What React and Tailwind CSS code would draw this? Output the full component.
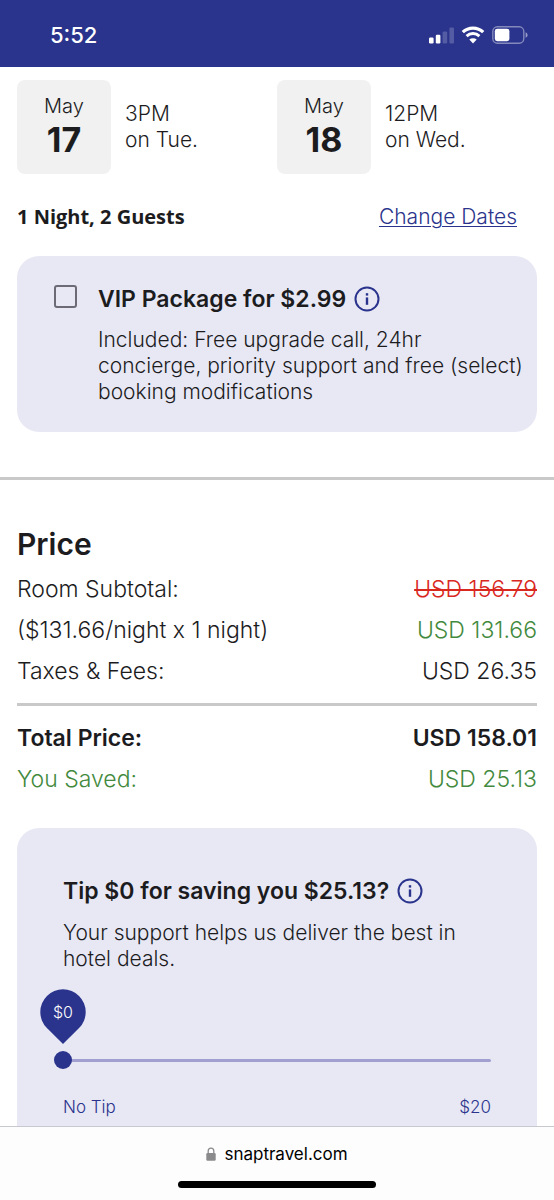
import { useState } from "react";

function InfoIcon() {
  return (
    <svg viewBox="0 0 26 26" className="size-[26px]" fill="none" aria-hidden="true">
      <circle cx="13" cy="13" r="11.5" stroke="#2a348c" strokeWidth="2" />
      <rect x="11.8" y="11.4" width="2.4" height="7.4" fill="#2a348c" />
      <rect x="11.8" y="7.2" width="2.4" height="2.4" fill="#2a348c" />
    </svg>
  );
}

function SignalIcon() {
  return (
    <svg viewBox="0 0 25 17" className="h-[17px] w-[25px]" fill="#fff" aria-hidden="true">
      <rect x="0" y="10.5" width="4.6" height="6" rx="1.2" />
      <rect x="6.8" y="7.8" width="4.6" height="8.7" rx="1.2" />
      <rect x="13.6" y="4.4" width="4.6" height="12.1" rx="1.2" opacity=".2" />
      <rect x="20.4" y="0.4" width="4.6" height="16.1" rx="1.2" opacity=".2" />
    </svg>
  );
}

function WifiIcon() {
  return (
    <svg viewBox="0 0 24 18" className="h-[18px] w-[24px]" fill="none" aria-hidden="true">
      <path d="M1.8 6.2a14.6 14.6 0 0 1 20.4 0" stroke="#fff" strokeWidth="3.2" />
      <path d="M5.6 10.1a9.2 9.2 0 0 1 12.8 0" stroke="#fff" strokeWidth="2.9" />
      <path d="M8.3 13.6a5.4 5.4 0 0 1 7.4 0L12 17.4Z" fill="#fff" />
    </svg>
  );
}

function BatteryIcon() {
  return (
    <svg viewBox="0 0 36 18" className="h-[18px] w-[36px]" fill="none" aria-hidden="true">
      <rect x="0.8" y="0.8" width="31" height="16.4" rx="4.6" stroke="#fff" strokeOpacity=".42" strokeWidth="1.4" />
      <rect x="2.8" y="2.8" width="14.6" height="12.4" rx="2.4" fill="#fff" />
      <path d="M33.6 6.2c1.3.5 2 1.6 2 2.8s-.7 2.3-2 2.8Z" fill="#fff" fillOpacity=".5" />
    </svg>
  );
}

function LockIcon() {
  return (
    <svg viewBox="0 0 10 14" className="h-[14px] w-[10px]" aria-hidden="true">
      <rect x="0.3" y="6" width="9.4" height="7.7" rx="1.3" fill="#8a8a8d" />
      <path d="M2.2 6.5V4a2.8 2.9 0 0 1 5.6 0v2.5" fill="none" stroke="#8a8a8d" strokeWidth="1.3" />
    </svg>
  );
}

function DateBlock({ month, day, time, weekday }) {
  return (
    <div className="flex items-center gap-[14px]">
      <div className="flex size-[94px] flex-col items-center justify-center rounded-lg bg-[#f1f1f1] pb-[4px]">
        <span className="text-[20px] leading-[30px] font-light">{month}</span>
        <span className="text-[34px] leading-[38px] font-bold">{day}</span>
      </div>
      <p className="text-[21px] leading-[26px] font-light">
        {time}
        <br />
        {weekday}
      </p>
    </div>
  );
}

function PriceRow({ label, value, rowClass = "font-light", valueClass = "" }) {
  return (
    <div className={`flex justify-between text-[23px] leading-[41px] ${rowClass}`}>
      <dt>{label}</dt>
      <dd className={valueClass}>{value}</dd>
    </div>
  );
}

function TipSlider() {
  const [tip, setTip] = useState(0);
  return (
    <div className="mt-[17px]">
      <div className="relative h-[80px]">
        <div className="absolute inset-x-0 top-[70px] h-[3px] rounded-full bg-[#a09fd0]" />
        <div className="absolute top-0 h-[55px] w-[46px] -translate-x-1/2" style={{ left: `${tip * 5}%` }}>
          <svg viewBox="0 0 46 55" className="absolute inset-0" aria-hidden="true">
            <path d="M6.9 39A22.7 22.7 0 1 1 39.1 39L23 55Z" fill="#2a348c" />
          </svg>
          <output htmlFor="tip" className="relative block text-center text-[16px] leading-[46px] font-light text-white">
            ${tip}
          </output>
        </div>
        <input
          id="tip"
          type="range"
          min="0"
          max="20"
          value={tip}
          onChange={(e) => setTip(Number(e.target.value))}
          aria-label="Tip amount"
          className="absolute top-[62px] -left-[9px] m-0 h-[18px] w-[calc(100%+18px)] cursor-pointer appearance-none bg-transparent [&::-webkit-slider-thumb]:size-[18px] [&::-webkit-slider-thumb]:appearance-none [&::-webkit-slider-thumb]:rounded-full [&::-webkit-slider-thumb]:bg-[#2a348c]"
        />
      </div>
      <div className="mt-[26px] flex justify-between text-[17px] leading-[24px] font-light text-[#2a348c]">
        <span>No Tip</span>
        <span>$20</span>
      </div>
    </div>
  );
}

export default function App() {
  return (
    <div className="flex h-screen flex-col bg-white font-[Inter,sans-serif] text-[#1c1c1e]">
      <header className="flex h-[67px] shrink-0 items-center justify-between bg-[#2a348c] pt-[3px] pr-[26px] pl-[50px] text-white">
        <time className="text-[22px] leading-[28px] font-medium">5:52</time>
        <div className="flex items-center gap-[7px]">
          <SignalIcon />
          <WifiIcon />
          <BatteryIcon />
        </div>
      </header>

      <main className="min-h-0 flex-1 overflow-hidden pt-[13px]">
        <section className="px-[17px] pb-[45px]">
          <div className="grid grid-cols-2">
            <DateBlock month="May" day="17" time="3PM" weekday="on Tue." />
            <DateBlock month="May" day="18" time="12PM" weekday="on Wed." />
          </div>
          <div className="mt-[28px] flex items-center justify-between pr-[20px] leading-[30px]">
            <p className="font-['Open_Sans',sans-serif] text-[20px] font-bold">1 Night, 2 Guests</p>
            <a
              href="#dates"
              className="text-[21px] font-light text-[#2a348c] underline decoration-1 underline-offset-2"
            >
              Change Dates
            </a>
          </div>

          <div className="mt-[24px] flex h-[176px] rounded-[22px] bg-[#e8e8f5] pt-[27px] pr-[10px] pl-[37px]">
            <input
              id="vip"
              type="checkbox"
              className="mt-[2px] mr-[21px] size-[23px] shrink-0 appearance-none rounded-[3px] border-2 border-[#6c6a75] checked:bg-[#2a348c]"
            />
            <div>
              <div className="flex items-center gap-[8px]">
                <label htmlFor="vip" className="text-[23px] leading-[32px] font-semibold">
                  VIP Package for $2.99
                </label>
                <button type="button" aria-label="About the VIP package">
                  <InfoIcon />
                </button>
              </div>
              <p className="mt-[12px] text-[21px] leading-[26px] font-light">
                Included: Free upgrade call, 24hr
                <br />
                concierge, priority support and free (select)
                <br />
                booking modifications
              </p>
            </div>
          </div>
        </section>

        <hr className="h-[3px] border-0 bg-[#c9c9c9]" />

        <section className="px-[17px] pt-[44px]">
          <h2 className="text-[30px] leading-[40px] font-semibold">Price</h2>
          <dl className="mt-[5px]">
            <PriceRow label="Room Subtotal:" value="USD 156.79" valueClass="text-[#d9281e] line-through" />
            <PriceRow label="($131.66/night x 1 night)" value="USD 131.66" valueClass="text-[#438a3e]" />
            <PriceRow label="Taxes & Fees:" value="USD 26.35" />
          </dl>
          <hr className="mt-[11px] h-[3px] border-0 bg-[#c9c9c9]" />
          <dl className="mt-[12px]">
            <PriceRow label="Total Price:" value="USD 158.01" rowClass="font-semibold" />
            <PriceRow label="You Saved:" value="USD 25.13" rowClass="font-light text-[#438a3e]" />
          </dl>

          <div className="mt-[28px] rounded-[22px] bg-[#e8e8f5] px-[46px] pt-[47px] pb-[40px]">
            <div className="flex items-center gap-[8px]">
              <h3 className="text-[23px] leading-[32px] font-semibold">Tip $0 for saving you $25.13?</h3>
              <button type="button" aria-label="About tips">
                <InfoIcon />
              </button>
            </div>
            <p className="mt-[13px] text-[21px] leading-[26px] font-light">
              Your support helps us deliver the best in hotel deals.
            </p>
            <TipSlider />
          </div>
        </section>
      </main>

      <footer className="flex h-[74px] shrink-0 flex-col items-center border-t border-[#c8c8d0] bg-[#fdfdfe] pt-[14px]">
        <div className="flex items-center gap-[8px] text-[17px] leading-[26px] text-black">
          <LockIcon />
          <span>snaptravel.com</span>
        </div>
        <div className="mt-[14px] h-[7px] w-[198px] rounded-full bg-black" />
      </footer>
    </div>
  );
}
